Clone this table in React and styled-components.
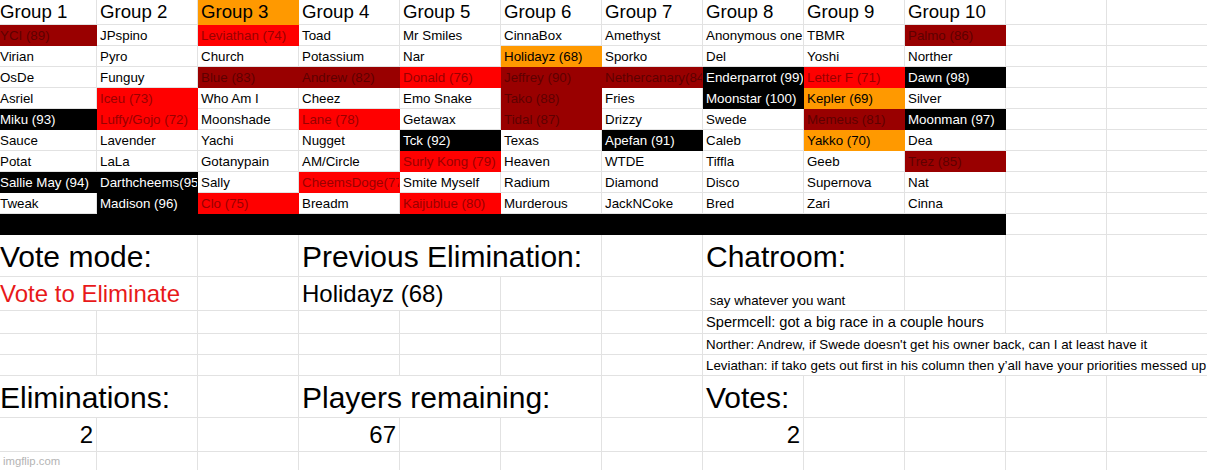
import React from 'react';
import styled, { createGlobalStyle } from 'styled-components';

const GlobalStyle = createGlobalStyle`
  html, body {
    margin: 0;
    padding: 0;
    background: #fff;
    overflow: hidden;
  }
  body {
    font-family: "Liberation Sans", Arial, sans-serif;
  }
`;

const fills = {
  d: { bg: '#990000', fg: '#5e0000' },
  r: { bg: '#ff0000', fg: '#990000' },
  o: { bg: '#ff9900', fg: '#000000' },
  k: { bg: '#000000', fg: '#ffffff' },
};

const headers = ['Group 1', 'Group 2', ['Group 3', 'o'], 'Group 4', 'Group 5', 'Group 6', 'Group 7', 'Group 8', 'Group 9', 'Group 10', '', ''];

const players = [
  [['YCI (89)', 'd'], 'JPspino', ['Leviathan (74)', 'r'], 'Toad', 'Mr Smiles', 'CinnaBox', 'Amethyst', 'Anonymous one', 'TBMR', ['Palmo (86)', 'd']],
  ['Virian', 'Pyro', 'Church', 'Potassium', 'Nar', ['Holidayz (68)', 'o'], 'Sporko', 'Del', 'Yoshi', 'Norther'],
  ['OsDe', 'Funguy', ['Blue (83)', 'd'], ['Andrew (82)', 'd'], ['Donald (76)', 'r'], ['Jeffrey (90)', 'd'], ['Nethercanary(84)', 'd'], ['Enderparrot (99)', 'k'], ['Letter F (71)', 'r'], ['Dawn (98)', 'k']],
  ['Asriel', ['Iceu (73)', 'r'], 'Who Am I', 'Cheez', 'Emo Snake', ['Tako (88)', 'd'], 'Fries', ['Moonstar (100)', 'k'], ['Kepler (69)', 'o'], 'Silver'],
  [['Miku (93)', 'k'], ['Luffy/Gojo (72)', 'r'], 'Moonshade', ['Lane (78)', 'r'], 'Getawax', ['Tidal (87)', 'd'], 'Drizzy', 'Swede', ['Memeus (81)', 'd'], ['Moonman (97)', 'k']],
  ['Sauce', 'Lavender', 'Yachi', 'Nugget', ['Tck (92)', 'k'], 'Texas', ['Apefan (91)', 'k'], 'Caleb', ['Yakko (70)', 'o'], 'Dea'],
  ['Potat', 'LaLa', 'Gotanypain', 'AM/Circle', ['Surly Kong (79)', 'r'], 'Heaven', 'WTDE', 'Tiffla', 'Geeb', ['Trez (85)', 'd']],
  [['Sallie May (94)', 'k'], ['Darthcheems(95)', 'k'], 'Sally', ['CheemsDoge(77)', 'r'], 'Smite Myself', 'Radium', 'Diamond', 'Disco', 'Supernova', 'Nat'],
  ['Tweak', ['Madison (96)', 'k'], ['Clo (75)', 'r'], 'Breadm', ['Kaijublue (80)', 'r'], 'Murderous', 'JackNCoke', 'Bred', 'Zari', 'Cinna'],
];

const empties = (n) => Array.from({ length: n }, () => ({}));

// lower panel: each row is a list of cells, span = how many columns the text runs over
const lower = [
  [{ t: 'Vote mode:', span: 2, size: 30 }, {}, { t: 'Previous Elimination:', span: 3, size: 30 }, {}, { t: 'Chatroom:', span: 2, size: 30 }, {}, {}, {}],
  [{ t: 'Vote to Eliminate', span: 2, size: 24, color: '#e8191a' }, {}, { t: 'Holidayz (68)', span: 2, size: 24 }, {}, {}, { t: ' say whatever you want', span: 2 }, {}, {}, {}],
  [...empties(7), { t: 'Spermcell: got a big race in a couple hours', span: 3, size: 14.67 }, {}, {}],
  [...empties(7), { t: "Norther: Andrew, if Swede doesn't get his owner back, can I at least have it", span: 5 }],
  [...empties(7), { t: 'Leviathan: if tako gets out first in his column then y\u2019all have your priorities messed up', span: 5 }],
  [{ t: 'Eliminations:', span: 2, size: 30 }, {}, { t: 'Players remaining:', span: 3, size: 30 }, {}, { t: 'Votes:', size: 30 }, {}, {}, {}, {}],
  [{ t: '2', size: 24, right: true }, {}, {}, { t: '67', size: 24, right: true }, {}, {}, {}, { t: '2', size: 24, right: true }, {}, {}, {}, {}],
  empties(12),
];

const Page = styled.div`
  position: relative;
  width: 1207px;
  height: 470px;
  overflow: hidden;
`;

const Sheet = styled.div`
  display: grid;
  margin-left: -3px;
  grid-template-columns: 100px repeat(11, 101px);
  grid-template-rows: 25px repeat(10, 21px) 42px 34px 23px 21px 21px 42px 34px 21px;
`;

const Cell = styled.div`
  box-sizing: border-box;
  grid-column: span ${(p) => p.$span || 1};
  display: flex;
  align-items: flex-end;
  justify-content: ${(p) => (p.$right ? 'flex-end' : 'flex-start')};
  padding: 0 3px ${(p) => (p.$size >= 30 ? 2 : p.$size > 20 ? 3 : 2)}px;
  overflow: hidden;
  white-space: pre;
  font-size: ${(p) => p.$size || 13.33}px;
  line-height: 1.13;
  color: ${(p) => (p.$fill ? fills[p.$fill].fg : p.$color || '#000')};
  background: ${(p) => (p.$fill ? fills[p.$fill].bg : '#fff')};
  border-right: 1px solid ${(p) => (p.$fill ? fills[p.$fill].bg : '#e2e2e2')};
  border-bottom: 1px solid ${(p) => (p.$fill ? fills[p.$fill].bg : '#e2e2e2')};
`;

const Watermark = styled.div`
  position: absolute;
  left: 3px;
  bottom: 3px;
  font-size: 11.3px;
  color: #b4b4b4;
`;

const unpack = (c) => (Array.isArray(c) ? c : [c, null]);

const App = () => {
  return (
    <Page>
      <GlobalStyle />
      <Sheet>
        {headers.map((h, i) => {
          const [text, fill] = unpack(h);
          return (
            <Cell key={`h${i}`} $fill={fill} $size={18.67}>
              <span>{text}</span>
            </Cell>
          );
        })}
        {players.map((row, r) =>
          [...row, '', ''].map((c, i) => {
            const [text, fill] = unpack(c);
            return (
              <Cell key={`p${r}-${i}`} $fill={fill}>
                <span>{text}</span>
              </Cell>
            );
          })
        )}
        {Array.from({ length: 12 }, (_, i) => (
          <Cell key={`bar${i}`} $fill={i < 10 ? 'k' : null} />
        ))}
        {lower.map((row, r) =>
          row.map((c, i) => (
            <Cell key={`l${r}-${i}`} $span={c.span} $size={c.size} $color={c.color} $right={c.right}>
              {c.t && <span>{c.t}</span>}
            </Cell>
          ))
        )}
      </Sheet>
      <Watermark>imgflip.com</Watermark>
    </Page>
  );
};

export default App;
